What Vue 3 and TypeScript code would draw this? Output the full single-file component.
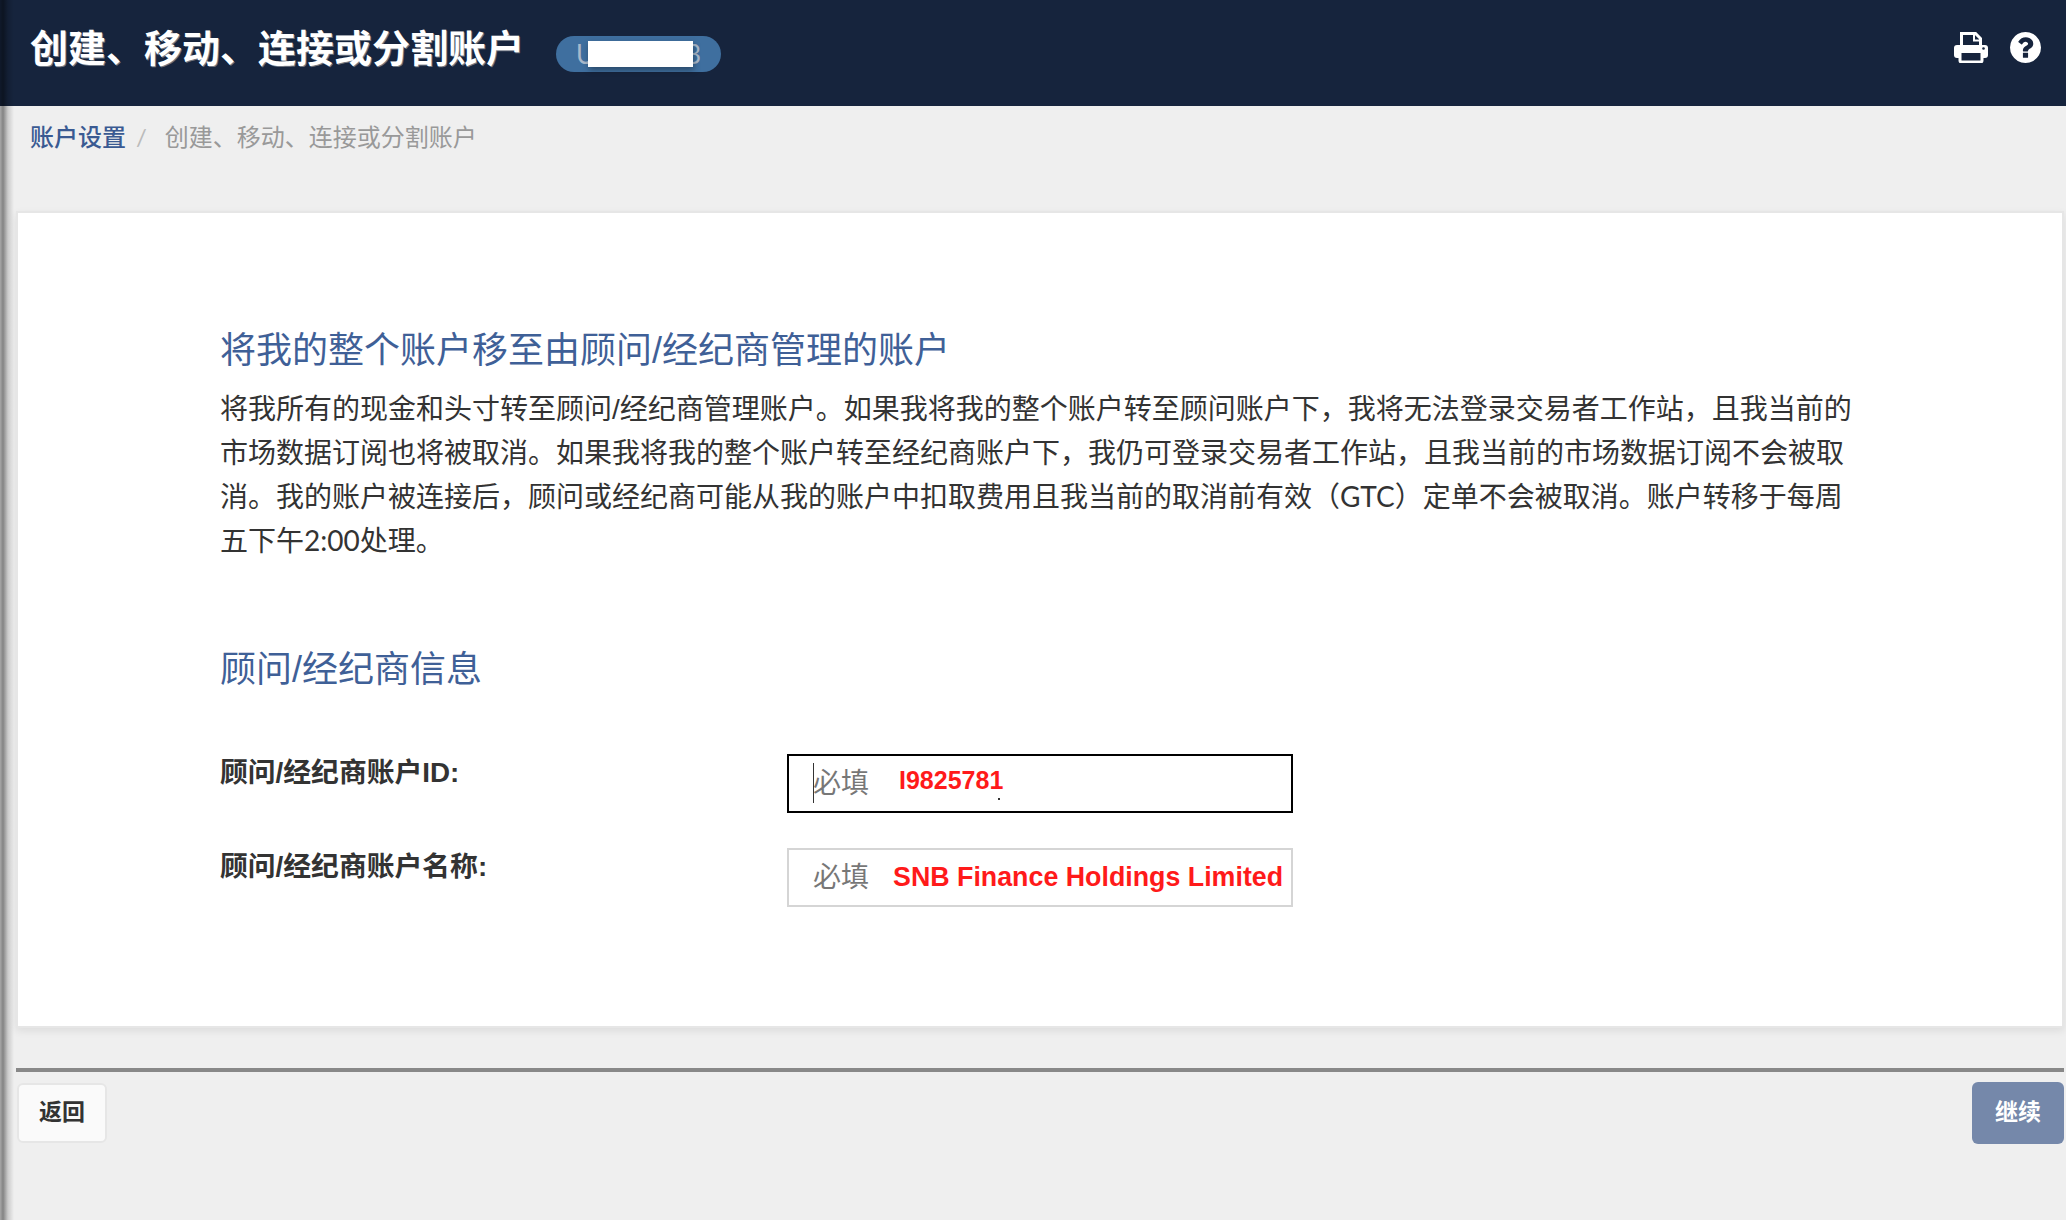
<template>
  <div class="page">
    <div class="edge"></div>
    <header class="topbar">
      <h1 class="title">创建、移动、连接或分割账户</h1>
      <div class="pill">
        <span>U</span><span>3</span>
        <i class="mask"></i>
      </div>
      <div class="tools">
        <svg class="print" viewBox="0 0 34 31" width="34" height="31">
          <path d="M7.5 15V1.5H21.5L26.500 6.500V15" fill="none" stroke="#fff" stroke-width="3" />
          <path d="M20 1.500V8.500H27" fill="none" stroke="#fff" stroke-width="2" />
          <rect x="0" y="13" width="34" height="13" rx="3" fill="#fff" />
          <rect x="6" y="18" width="22" height="12" rx="1.500" fill="#16243d" stroke="#fff" stroke-width="3" />
          <rect x="7" y="18" width="20" height="3" fill="#fff" />
          <circle cx="29.500" cy="16.500" r="1.300" fill="#16243d" />
        </svg>
        <svg class="help" viewBox="128 128 1536 1536" width="31" height="31">
          <path
            fill="#fff"
            d="M1024 1376v-192q0-14-9-23t-23-9h-192q-14 0-23 9t-9 23v192q0 14 9 23t23 9h192q14 0 23-9t9-23zm256-672q0-88-55.500-163t-138.500-116-170-41q-243 0-371 213-15 24 8 42l132 100q7 6 19 6 16 0 25-12 53-68 86-92 34-24 86-24 48 0 85.500 26t37.500 59q0 38-20 61t-68 45q-63 28-115.500 86.500t-52.500 125.500v36q0 14 9 23t23 9h192q14 0 23-9t9-23q0-19 21.500-49.500t54.500-49.500q32-18 49-28.500t46-35 44.500-48 28-60.500 12.500-81zm384 192q0 209-103 385.500t-279.500 279.500-385.500 103-385.500-103-279.500-279.500-103-385.500 103-385.500 279.500-279.500 385.500-103 385.500 103 279.500 279.500 103 385.500z"
          />
        </svg>
      </div>
    </header>

    <nav class="crumbs">
      <a class="crumb-link">账户设置</a>
      <span class="sep">/</span>
      <span class="crumb-now">创建、移动、连接或分割账户</span>
    </nav>

    <main class="card">
      <h2 class="head">将我的整个账户移至由顾问<span class="slash">/</span>经纪商管理的账户</h2>
      <p class="body-text">
        将我所有的现金和头寸转至顾问<span class="slash">/</span>经纪商管理账户。如果我将我的整个账户转至顾问账户下，我将无法登录交易者工作站，且我当前的<br />市场数据订阅也将被取消。如果我将我的整个账户转至经纪商账户下，我仍可登录交易者工作站，且我当前的市场数据订阅不会被取<br />消。我的账户被连接后，顾问或经纪商可能从我的账户中扣取费用且我当前的取消前有效（GTC）定单不会被取消。账户转移于每周<br />五下午2:00处理。
      </p>

      <h2 class="head head-two">顾问<span class="slash">/</span>经纪商信息</h2>
      <div class="form">
        <label class="label">顾问/经纪商账户ID:</label>
        <div class="field focused">
          <i class="caret"></i>
          <span class="hint">必填</span>
          <span class="typed typed-id">I9825781</span>
          <i class="speck"></i>
        </div>
        <label class="label">顾问/经纪商账户名称:</label>
        <div class="field">
          <span class="hint">必填</span>
          <span class="typed typed-name">SNB Finance Holdings Limited</span>
        </div>
      </div>
    </main>

    <footer class="actions">
      <button class="btn back">返回</button>
      <button class="btn next">继续</button>
    </footer>
  </div>
</template>

<script setup lang="ts">
</script>

<style>
html,
body {
  margin: 0;
  background: #efefef;
}
</style>

<style scoped>
.page {
  position: relative;
  width: 2066px;
  height: 1220px;
  overflow: hidden;
  background: #efefef;
  font-family: Lato, "Noto Sans CJK SC", sans-serif;
  color: #333;
}
.edge {
  position: absolute;
  z-index: 2;
  left: 0;
  top: 0;
  bottom: 0;
  width: 14px;
  background: linear-gradient(to right, rgba(0, 0, 0, 0.3), rgba(0, 0, 0, 0.45) 3px, rgba(0, 0, 0, 0.15) 8px, rgba(0, 0, 0, 0));
  pointer-events: none;
}
.topbar {
  display: flex;
  align-items: center;
  height: 106px;
  padding: 0 25px 0 30px;
  box-sizing: border-box;
  background: #16243d;
}
.title {
  margin: 0 0 12px;
  font-size: 38px;
  font-weight: 700;
  line-height: 50px;
  color: #fff;
  text-shadow: 1px 1px 0 rgba(200, 200, 200, 0.5);
}
.pill {
  position: relative;
  display: flex;
  justify-content: space-between;
  align-items: center;
  box-sizing: border-box;
  width: 165px;
  height: 36px;
  margin: 2px 0 0 32px;
  padding: 0 20px;
  border-radius: 18px;
  background: #3f6f9f;
  color: #a9b9cb;
  font-size: 26px;
}
.mask {
  position: absolute;
  left: 32px;
  top: 5px;
  width: 105px;
  height: 26px;
  background: #fff;
  box-shadow: 1px 3px 6px rgba(0, 0, 0, 0.35);
}
.tools {
  display: flex;
  align-items: center;
  gap: 22px;
  margin-left: auto;
  padding-bottom: 11px;
}
.crumbs {
  display: flex;
  align-items: center;
  height: 34px;
  padding: 14px 0 0 30px;
  font-size: 24px;
  line-height: 34px;
}
.crumb-link {
  color: #3a5a92;
  font-weight: 500;
}
.sep {
  margin: 0 18px 0 10px;
  color: #bbb;
}
.crumb-now {
  color: #999;
}
.card {
  box-sizing: border-box;
  width: 2048px;
  height: 817px;
  margin: 57px 0 0 16px;
  padding: 112px 0 0 202px;
  background: #fff;
  border: 2px solid #e6e6e6;
  box-shadow: 0 3px 8px rgba(0, 0, 0, 0.08);
}
.head {
  margin: 0;
  font-size: 36px;
  font-weight: 400;
  line-height: 48px;
  color: #3f6097;
}
.slash {
  font-family: "Liberation Sans", Arial, sans-serif;
  line-height: 0;
}
.body-text {
  margin: 13px 0 0;
  font-size: 28px;
  line-height: 44px;
  white-space: nowrap;
  color: #333;
}
.head-two {
  margin-top: 82px;
}
.form {
  display: grid;
  grid-template-columns: 567px 506px;
  grid-auto-rows: 59px;
  row-gap: 35px;
  margin-top: 62px;
}
.label {
  padding-top: 1px;
  font-family: "Liberation Sans", "Noto Sans CJK SC", sans-serif;
  font-size: 27.8px;
  font-weight: 700;
  line-height: 36px;
  color: #333;
}
.field {
  position: relative;
  display: flex;
  align-items: center;
  box-sizing: border-box;
  padding-left: 24px;
  background: #fff;
  border: 2px solid #d5d5d5;
}
.focused {
  border-color: #000;
}
.hint {
  margin-bottom: 3px;
  font-size: 28px;
  line-height: 40px;
  color: #777;
}
.typed {
  font-family: "Liberation Sans", Arial, sans-serif;
  font-weight: 700;
  font-size: 25px;
  color: #ff1a1a;
}
.typed-id {
  margin: 0 0 6px 30px;
}
.typed-name {
  margin: 0 0 0 24px;
  font-size: 26.800px;
  white-space: nowrap;
}
.caret {
  position: absolute;
  left: 24px;
  top: 7px;
  width: 1px;
  height: 40px;
  background: #333;
}
.speck {
  position: absolute;
  left: 209px;
  top: 42px;
  width: 2px;
  height: 2px;
  background: #333;
}
.actions {
  display: flex;
  justify-content: space-between;
  align-items: flex-start;
  width: 2048px;
  margin: 40px 0 0 16px;
  padding-top: 11px;
  border-top: 4px solid #888;
}
.btn {
  font-family: inherit;
  font-size: 23px;
  font-weight: 700;
  border-radius: 6px;
  padding: 0 0 6px;
}
.back {
  width: 90px;
  height: 60px;
  margin-left: 1px;
  background: #fafafa;
  border: 2px solid #e6e6e6;
  color: #333;
}
.next {
  width: 92px;
  height: 62px;
  margin-top: -1px;
  background: #7588aa;
  border: none;
  color: #fff;
}
</style>
